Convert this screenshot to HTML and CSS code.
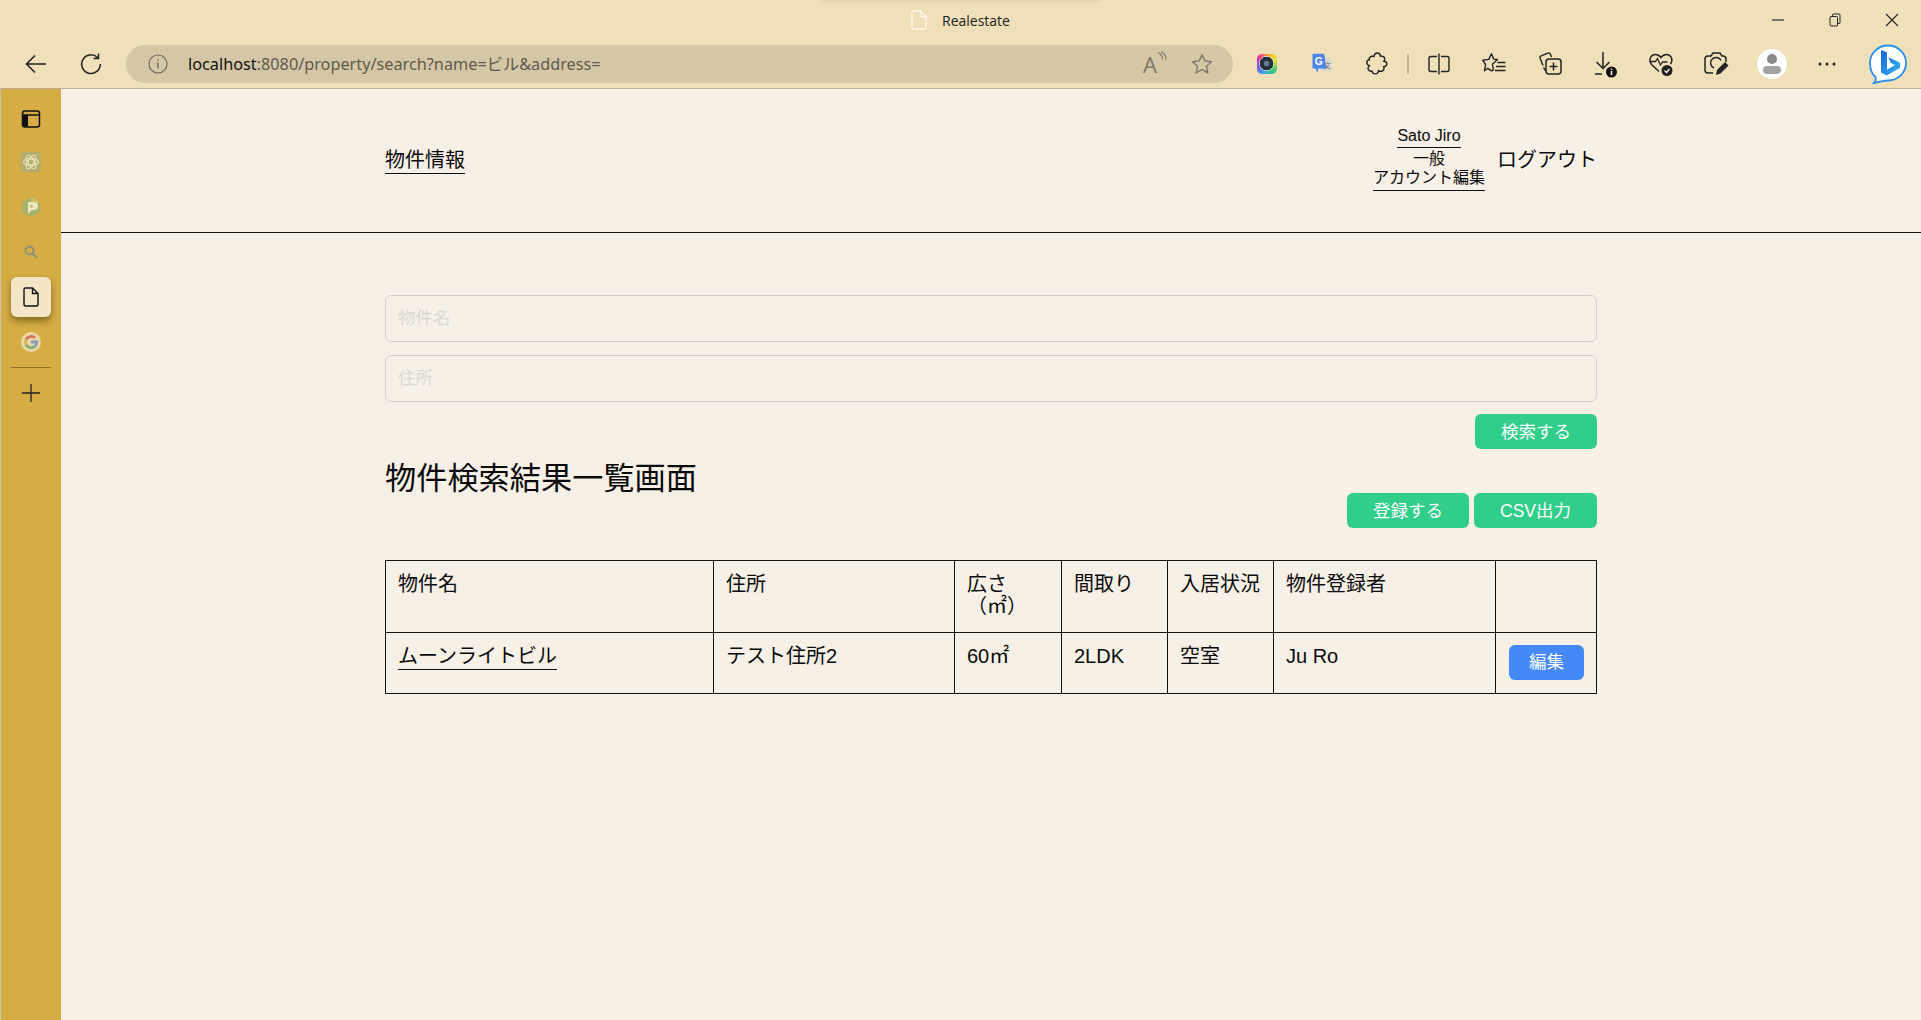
FILE: index.html
```html
<!DOCTYPE html>
<html lang="ja">
<head>
  <meta charset="UTF-8">
  <meta name="viewport" content="width=device-width, initial-scale=1.0">
  <title>Realestate</title>
  <link rel="stylesheet" href="styles.css">
</head>
<body>
  <div class="titlebar">
    <div class="tab-glow"></div>
    <div class="title">
      <svg class="title-icon" viewBox="0 0 16 20"><path d="M2.500 1h7L15 6.500V17.500a1.500 1.500 0 0 1-1.500 1.500h-11A1.500 1.500 0 0 1 1 17.500V2.500A1.500 1.500 0 0 1 2.500 1zM9.500 1v5.500H15" fill="none" stroke="#fff9e8" stroke-width="1.300"/></svg>
      <span>Realestate</span>
    </div>
    <div class="window-controls">
      <span class="win-btn"><svg width="12" height="12" viewBox="0 0 12 12"><path d="M0 6h12" stroke="#222" stroke-width="1.100"/></svg></span>
      <span class="win-btn"><svg width="14" height="14" viewBox="0 0 14 14"><path d="M2 4.500a1 1 0 0 1 1-1h5.500a1 1 0 0 1 1 1V12a1 1 0 0 1-1 1H3a1 1 0 0 1-1-1zM4.500 3.500V2a1 1 0 0 1 1-1H11a1 1 0 0 1 1 1v7.500a1 1 0 0 1-1 1H9.500" fill="none" stroke="#222"/></svg></span>
      <span class="win-btn"><svg width="14" height="14" viewBox="0 0 14 14"><path d="M1 1l12 12M13 1L1 13" stroke="#222" stroke-width="1.100"/></svg></span>
    </div>
  </div>

  <div class="toolbar">
    <span class="tool">
      <svg width="24" height="24" viewBox="0 0 24 24"><path d="M22 12H3M11 3.500L2.500 12l8.500 8.500" fill="none" stroke="#222" stroke-width="1.600"/></svg>
    </span>
    <span class="tool">
      <svg width="24" height="24" viewBox="0 0 24 24"><path d="M18.500 5.500A9.300 9.300 0 1 0 21.300 12M19.500 1.500v5h-5" fill="none" stroke="#222" stroke-width="1.500"/></svg>
    </span>
    <div class="address">
      <svg class="info" width="20" height="20" viewBox="0 0 20 20"><circle cx="10" cy="10" r="9" fill="none" stroke="#6f6a5c" stroke-width="1.200"/><path d="M10 8.500v6M10 5.200v1.600" stroke="#6f6a5c" stroke-width="1.300"/></svg>
      <span class="url"><b>localhost</b>:8080/property/search?name=ビル&amp;address=</span>
      <span class="addr-icon readaloud">
        <span class="read-a">A</span>
        <svg width="10" height="14" viewBox="0 0 10 14"><path d="M1 1.500c3 1.500 4.500 4 4.500 7M4 0.800c3.200 1.500 5 4.500 5 8" fill="none" stroke="#7d7767" stroke-width="1.100"/></svg>
      </span>
      <span class="addr-icon">
        <svg width="24" height="24" viewBox="0 0 24 24"><path d="M12 2.800l2.800 6.100 6.600.8-4.900 4.500 1.300 6.600-5.800-3.300-5.800 3.300 1.300-6.600-4.900-4.500 6.600-.8z" fill="none" stroke="#7d7767" stroke-width="1.400" stroke-linejoin="round"/></svg>
      </span>
    </div>

    <span class="tool first-ext"><span class="lens"><span class="lens-eye"></span></span></span>
    <span class="tool">
      <svg width="22" height="24" viewBox="0 0 30 32">
        <path d="M13 7h14a1 1 0 0 1 1 1v17a1 1 0 0 1-1 1H13z" fill="#dcd9cf"/>
        <text x="17" y="22" class="tr-glyph">文</text>
        <path d="M3 2h15l3 20H10l-1 6-3-6H3a1 1 0 0 1-1-1V3a1 1 0 0 1 1-1z" fill="#4f86ec"/>
        <text x="5" y="17" class="tr-g">G</text>
      </svg>
    </span>
    <span class="tool">
      <svg width="22" height="24" viewBox="0 0 22 24"><path d="M8 4.500c.3-2.300 1.500-3.500 3.300-3.500s3 1.300 3.200 3.300c1.500-.4 4 .2 4.200 2.200.1 1.500-.8 2.800-.8 2.800s2.600 0 2.900 2.300c.2 2-1.600 3-3.200 3 .6 1.500.4 3.400-1 4.300-1.300.8-3 .3-3.900-.3-.4 1.800-1.800 3.400-3.700 3.300-1.800-.1-2.700-1.500-3-2.800-1.400.3-3.300-.1-3.800-1.800-.4-1.500.3-2.800 1.300-3.500C1.800 13.200.7 12 .8 10.300c.2-1.600 1.500-2.400 2.500-2.500C3 6.400 3.600 5 5 4.500c1-.4 2.200-.2 3 0z" fill="none" stroke="#222" stroke-width="1.400"/></svg>
    </span>
    <span class="tool-sep"></span>
    <span class="tool wide">
      <svg width="24" height="24" viewBox="0 0 24 24"><path d="M10 4.500H4a2 2 0 0 0-2 2v11a2 2 0 0 0 2 2h6M14 4.500h6a2 2 0 0 1 2 2v11a2 2 0 0 1-2 2h-6M12 1.500v21" fill="none" stroke="#222" stroke-width="1.400"/></svg>
    </span>
    <span class="tool wide">
      <svg width="24" height="24" viewBox="0 0 24 24"><path d="M9.500 1.800l2.200 5.300 3.800.4-3.100 3v0l-2 1.500 1 5.800-1.900 1-3.700-2.500-3.300 2.500 1.100-6.300L.8 8.300l5.900-.9zM15.500 10.500h8M14 14.500h9.500M13 18.500h10.500" fill="none" stroke="#222" stroke-width="1.400" stroke-linejoin="round"/></svg>
    </span>
    <span class="tool wide">
      <svg width="26" height="26" viewBox="0 0 26 26"><path d="M6 14.500L3.200 7.500a2 2 0 0 1 1-2.600l6.500-2.700a2 2 0 0 1 2.600.9L14.500 6M8.500 20l-2-3.500" fill="none" stroke="#222" stroke-width="1.400"/><rect x="9" y="8" width="15" height="15" rx="3" fill="none" stroke="#222" stroke-width="1.500"/><path d="M16.500 11.500v8M12.500 15.500h8" stroke="#222" stroke-width="1.500"/></svg>
    </span>
    <span class="tool wide">
      <svg width="28" height="28" viewBox="0 0 28 28"><path d="M12 2v16M5.500 12L12 18.500l6.500-6.500M4 24h7" fill="none" stroke="#222" stroke-width="1.500"/><circle cx="20.500" cy="22" r="5.500" fill="#111"/><path d="M20.500 21v4M20.500 18.800v1.200" stroke="#fff" stroke-width="1.500"/></svg>
    </span>
    <span class="tool wide">
      <svg width="28" height="28" viewBox="0 0 28 28"><path d="M12 21.500l-7-6.500c-4-4.500-1.500-10.500 3.500-10.500 2.500 0 4 1 5.500 3 1.500-2 3-3 5.500-3 4.500 0 7 5 4 9.500" fill="none" stroke="#222" stroke-width="1.500"/><path d="M2.500 11.500h6l2-3 3 6.500 2-3h5" fill="none" stroke="#222" stroke-width="1.300"/><circle cx="20" cy="20.500" r="5.500" fill="#222"/><path d="M17.500 20.500l2 2 3-3.500" fill="none" stroke="#fff" stroke-width="1.200"/></svg>
    </span>
    <span class="tool wide">
      <svg width="28" height="28" viewBox="0 0 28 28"><path d="M11 23H6a3 3 0 0 1-3-3V9a3 3 0 0 1 3-3h3l2-3h7l2 3h1a3 3 0 0 1 3 3v3" fill="none" stroke="#222" stroke-width="1.500"/><path d="M19 10.500a5.500 5.500 0 1 0-7 7.500" fill="none" stroke="#222" stroke-width="1.500"/><path d="M14 25l1-5 8-8 3.500 3.500-8 8z" fill="#222"/></svg>
    </span>
    <span class="tool wide"><span class="avatar">
      <svg width="20" height="22" viewBox="0 0 20 22"><circle cx="10" cy="6" r="5" fill="#8a8a8a"/><path d="M1 17a4 4 0 0 1 4-4h10a4 4 0 0 1 4 4v1a4 4 0 0 1-4 3H5a4 4 0 0 1-4-3z" fill="#a3a3a3"/></svg>
    </span></span>
    <span class="tool wide">
      <svg width="18" height="4" viewBox="0 0 18 4"><circle cx="2" cy="2" r="1.500" fill="#222"/><circle cx="9" cy="2" r="1.500" fill="#222"/><circle cx="16" cy="2" r="1.500" fill="#222"/></svg>
    </span>
    <span class="tool bing">
      <svg width="40" height="40" viewBox="0 0 40 40">
        <defs><linearGradient id="bingGrad" x1="0" y1="0" x2="1" y2="1"><stop offset="0" stop-color="#1c62d8"/><stop offset="1" stop-color="#2fb6f0"/></linearGradient></defs>
        <path d="M20 1.500c10 0 18 8 18 17.500S30 36.500 20 36.500c-4 0-8 1.500-14 2.500 2-2 2-4 1.500-6C4 30 2 25 2 19 2 9.500 10 1.500 20 1.500z" fill="#fff" stroke="#2a90ee" stroke-width="1.800"/>
        <path d="M13 6l6 2.200v17.500l8-4.600-4.200-2-2.400-5.800 11.600 5.400v5.200l-13.500 7.600-5.500-3.100z" fill="url(#bingGrad)"/>
      </svg>
    </span>
  </div>

  <div class="layout">
    <aside class="sidebar">
      <span class="side-item panel-item">
        <svg width="20" height="20" viewBox="0 0 20 20"><rect x="1.500" y="2" width="17" height="16" rx="2.500" fill="none" stroke="#111" stroke-width="1.500"/><path d="M1.500 6h17" stroke="#111" stroke-width="1.500"/><rect x="2" y="6" width="5" height="11.500" fill="#111"/></svg>
      </span>
      <span class="side-item">
        <svg width="20" height="20" viewBox="0 0 20 20"><rect width="20" height="20" rx="4" fill="#b5ac70"/><g fill="none" stroke="#e6e0b4" stroke-width="1.200"><circle cx="10" cy="10" r="3"/><ellipse cx="10" cy="10" rx="7.500" ry="3.500"/><ellipse cx="10" cy="10" rx="7.500" ry="3.500" transform="rotate(60 10 10)"/><ellipse cx="10" cy="10" rx="7.500" ry="3.500" transform="rotate(120 10 10)"/></g></svg>
      </span>
      <span class="side-item">
        <svg width="20" height="20" viewBox="0 0 20 20"><path d="M10 0l9 5v10l-9 5-9-5V5z" fill="#a3b36a"/><path d="M10 0l9 5-4 2-5-3z" fill="#d2c263"/><path d="M7 5h6a3.500 3.500 0 0 1 0 8h-2.500l-3.500 4z" fill="#f0e6c0"/><path d="M9.500 7.500v3.500l3-1.700z" fill="#a3b36a"/></svg>
      </span>
      <span class="side-item">
        <svg width="14" height="14" viewBox="0 0 14 14"><circle cx="5.500" cy="5.500" r="4" fill="none" stroke="#8f9274" stroke-width="2"/><path d="M8.500 8.500l4.500 4.500" stroke="#8f9274" stroke-width="2.400"/></svg>
      </span>
      <span class="side-item active">
        <svg width="16" height="20" viewBox="0 0 16 20"><path d="M2.500 1h7L15 6.500V17.500a1.500 1.500 0 0 1-1.500 1.500h-11A1.500 1.500 0 0 1 1 17.500V2.500A1.500 1.500 0 0 1 2.500 1zM9.500 1v5.500H15" fill="none" stroke="#111" stroke-width="1.400"/></svg>
      </span>
      <span class="side-item">
        <svg width="20" height="20" viewBox="0 0 20 20">
          <circle cx="10" cy="10" r="10" fill="#e8d8a8"/>
          <g fill="none" stroke-width="2.800">
            <path d="M5.100 7.500A5.800 5.800 0 0 1 14 5.900" stroke="#d4745a"/>
            <path d="M5.100 12.700a5.800 5.800 0 0 1 0-5.200" stroke="#d9b64a"/>
            <path d="M13.800 14.400a5.800 5.800 0 0 1-8.700-1.700" stroke="#86ad6c"/>
            <path d="M10 10h5.700a5.800 5.800 0 0 1-1.900 4.400" stroke="#8799bd"/>
          </g>
        </svg>
      </span>
      <span class="side-divider"></span>
      <span class="side-item">
        <svg width="18" height="18" viewBox="0 0 18 18"><path d="M9 0v18M0 9h18" stroke="#222" stroke-width="1.300"/></svg>
      </span>
    </aside>

    <main class="main">
      <header class="site-header">
        <div class="container header-inner">
          <a class="nav-link" href="#">物件情報</a>
          <div class="user-area">
            <div class="user-info">
              <a class="user-name" href="#">Sato Jiro</a>
              <span class="user-role">一般</span>
              <a class="user-edit" href="#">アカウント編集</a>
            </div>
            <span class="logout">ログアウト</span>
          </div>
        </div>
      </header>

      <section class="container content">
        <form class="search-form">
          <input class="field" type="text" placeholder="物件名">
          <input class="field" type="text" placeholder="住所">
          <div class="search-actions">
            <button class="btn btn-green" type="button">検索する</button>
          </div>
        </form>

        <div class="list-head">
          <h1 class="page-title">物件検索結果一覧画面</h1>
          <div class="list-actions">
            <button class="btn btn-green" type="button">登録する</button>
            <button class="btn btn-green btn-csv" type="button">CSV出力</button>
          </div>
        </div>

        <table class="result-table">
          <colgroup>
            <col class="c-name"><col class="c-addr"><col class="c-area"><col class="c-plan"><col class="c-status"><col class="c-owner"><col class="c-edit">
          </colgroup>
          <thead>
            <tr>
              <th>物件名</th>
              <th>住所</th>
              <th>広さ<br>（㎡）</th>
              <th>間取り</th>
              <th>入居状況</th>
              <th>物件登録者</th>
              <th></th>
            </tr>
          </thead>
          <tbody>
            <tr>
              <td><a class="prop-link" href="#">ムーンライトビル</a></td>
              <td>テスト住所2</td>
              <td>60㎡</td>
              <td>2LDK</td>
              <td>空室</td>
              <td>Ju Ro</td>
              <td><button class="btn btn-blue" type="button">編集</button></td>
            </tr>
          </tbody>
        </table>
      </section>
    </main>
  </div>
</body>
</html>
```

FILE: styles.css
```css
* {
  box-sizing: border-box;
}
html, body {
  height: 100%;
}
body {
  margin: 0;
  display: flex;
  flex-direction: column;
  overflow: hidden;
  background: #f7f0e6;
  color: #0a0a0a;
  font-family: "Liberation Sans", "Noto Sans CJK JP", sans-serif;
  font-size: 20px;
}

/* browser chrome */
.titlebar {
  position: relative;
  display: grid;
  grid-template-columns: 1fr auto 1fr;
  align-items: center;
  height: 40px;
  background: #efe0b9;
}
.tab-glow {
  position: absolute;
  top: 0;
  left: 820px;
  width: 280px;
  height: 4px;
  background: linear-gradient(#e2d3ac, #efe0b9);
  border-radius: 0 0 12px 12px;
}
.title {
  grid-column: 2;
  display: flex;
  align-items: center;
  gap: 15px;
  font-family: "Open Sans", "Noto Sans", sans-serif;
  font-size: 14px;
  color: #222;
}
.title-icon {
  width: 16px;
  height: 20px;
}
.window-controls {
  grid-column: 3;
  justify-self: end;
  display: flex;
  padding-right: 1px;
}
.win-btn {
  display: flex;
  align-items: center;
  justify-content: center;
  width: 57px;
  height: 40px;
}
.toolbar {
  display: flex;
  align-items: center;
  height: 49px;
  padding: 0 0 1px 8px;
  background: #efe0b9;
  border-bottom: 1px solid #bcb196;
}
.tool {
  display: flex;
  align-items: center;
  justify-content: center;
  flex: none;
  width: 55px;
  height: 40px;
}
.tool.wide {
  width: 55.5px;
}
.tool.bing {
  width: 62px;
  margin-left: 2px;
}
.tool-sep {
  flex: none;
  width: 2px;
  height: 20px;
  margin: 0 2.5px;
  background: #bfb291;
}
.first-ext {
  margin-left: 6px;
}
.address {
  flex: none;
  display: flex;
  align-items: center;
  width: 1107px;
  height: 38px;
  margin-left: 8px;
  padding-left: 22px;
  border-radius: 19px;
  background: #d3c7a5;
}
.url {
  margin-left: 20px;
  margin-top: -1px;
  font-family: "Noto Sans", "Noto Sans CJK JP", sans-serif;
  font-size: 16.25px;
  color: #5f5a4c;
  white-space: nowrap;
}
.url b {
  font-weight: 400;
  color: #111;
}
.addr-icon {
  display: flex;
  align-items: center;
  justify-content: center;
  width: 30px;
  margin-right: 16px;
}
.readaloud {
  margin-left: auto;
  margin-right: 17px;
  align-items: flex-start;
}
.read-a {
  font-family: "Open Sans", sans-serif;
  font-size: 22px;
  line-height: 26px;
  color: #7d7767;
}
.lens {
  display: flex;
  align-items: center;
  justify-content: center;
  width: 20px;
  height: 20px;
  border-radius: 5px;
  background: conic-gradient(#f0a030, #f2e030 60deg, #40c878 130deg, #30a8e8 200deg, #a040d8 270deg, #f03a8a 320deg, #f0a030);
}
.lens-eye {
  width: 15px;
  height: 15px;
  border-radius: 50%;
  background: radial-gradient(#5d7d90 25%, #22303a 30%, #22303a 62%, #e9e9e9 67%);
}
.tr-g {
  font-family: "Liberation Sans", sans-serif;
  font-size: 14px;
  font-weight: 700;
  fill: #fff;
}
.tr-glyph {
  font-family: "Noto Sans CJK JP", sans-serif;
  font-size: 10px;
  fill: #77756d;
}
.avatar {
  display: flex;
  align-items: center;
  justify-content: center;
  width: 30px;
  height: 30px;
  border-radius: 50%;
  background: #fff;
}

/* left rail */
.layout {
  flex: 1;
  display: flex;
  min-height: 0;
}
.sidebar {
  flex: none;
  display: flex;
  flex-direction: column;
  align-items: center;
  gap: 5px;
  width: 61px;
  padding-top: 8px;
  background: #d6ad45;
  border-left: 1px solid #cfc5a8;
}
.side-item {
  display: flex;
  align-items: center;
  justify-content: center;
  width: 40px;
  height: 40px;
}
.panel-item {
  padding-top: 4px;
}
.side-item.active {
  border-radius: 6px;
  background: #f2e6c6;
  box-shadow: 0 4px 7px rgba(70, 50, 0, 0.55);
}
.side-divider {
  width: 40px;
  height: 1px;
  background: #8d7128;
}

/* page */
.main {
  flex: 1;
  min-width: 0;
}
.container {
  width: 1212px;
  margin: 0 auto;
}
.site-header {
  height: 144px;
  border-bottom: 1px solid #111;
}
.header-inner {
  display: flex;
  align-items: center;
  justify-content: space-between;
  height: 100%;
}
a {
  color: inherit;
  text-decoration: none;
}
.nav-link {
  border-bottom: 1px solid #111;
  line-height: 26px;
}
.user-area {
  display: flex;
  align-items: center;
  gap: 12px;
  margin-top: -5px;
}
.user-info {
  display: flex;
  flex-direction: column;
  align-items: center;
  font-size: 16px;
  line-height: 19px;
}
.user-name {
  border-bottom: 1px solid #111;
  padding-bottom: 2px;
}
.user-role {
  margin-top: 1px;
}
.user-edit {
  border-bottom: 1px solid #111;
  padding-bottom: 3px;
}
.logout {
  font-size: 20px;
}
.content {
  padding-top: 62px;
}
.field {
  display: block;
  width: 100%;
  height: 47px;
  margin-bottom: 13px;
  padding: 0 12px;
  border: 1px solid #d3cec8;
  border-radius: 6px;
  background: transparent;
  font: inherit;
  font-size: 17.5px;
}
.field::placeholder {
  color: #dad8d4;
}
.search-actions {
  display: flex;
  justify-content: flex-end;
  margin-top: -1px;
}
.btn {
  height: 35px;
  padding: 2px 0 0;
  border: 0;
  border-radius: 6px;
  color: #fff;
  font: inherit;
  font-size: 17.5px;
  line-height: 31px;
}
.btn-green {
  width: 122px;
  background: #30ce8a;
}
.btn-csv {
  width: 123px;
}
.btn-blue {
  width: 75px;
  padding-top: 0;
  background: #4589f7;
}
.list-head {
  display: flex;
  justify-content: space-between;
  margin-top: 10px;
}
.page-title {
  margin: 0;
  font-size: 31.2px;
  font-weight: 400;
  line-height: 40px;
}
.list-actions {
  display: flex;
  gap: 5px;
  margin-top: 34px;
}
.result-table {
  width: 1211px;
  margin-top: 32px;
  border-collapse: collapse;
  table-layout: fixed;
}
.c-name { width: 328px; }
.c-addr { width: 241px; }
.c-area { width: 107px; }
.c-plan { width: 106px; }
.c-status { width: 106px; }
.c-owner { width: 222px; }
.c-edit { width: 101px; }
.result-table th,
.result-table td {
  padding: 11px 0 11px 12px;
  border: 1px solid #111;
  font-size: 20px;
  font-weight: 400;
  line-height: 24px;
  text-align: left;
  vertical-align: top;
}
.result-table th {
  height: 72px;
  padding-top: 12px;
  line-height: 22px;
}
.result-table td {
  height: 61px;
}
.prop-link {
  border-bottom: 1px solid #111;
  padding-bottom: 2px;
}
.result-table td .btn-blue {
  display: block;
  margin: 1px 0 0 1px;
}
```
